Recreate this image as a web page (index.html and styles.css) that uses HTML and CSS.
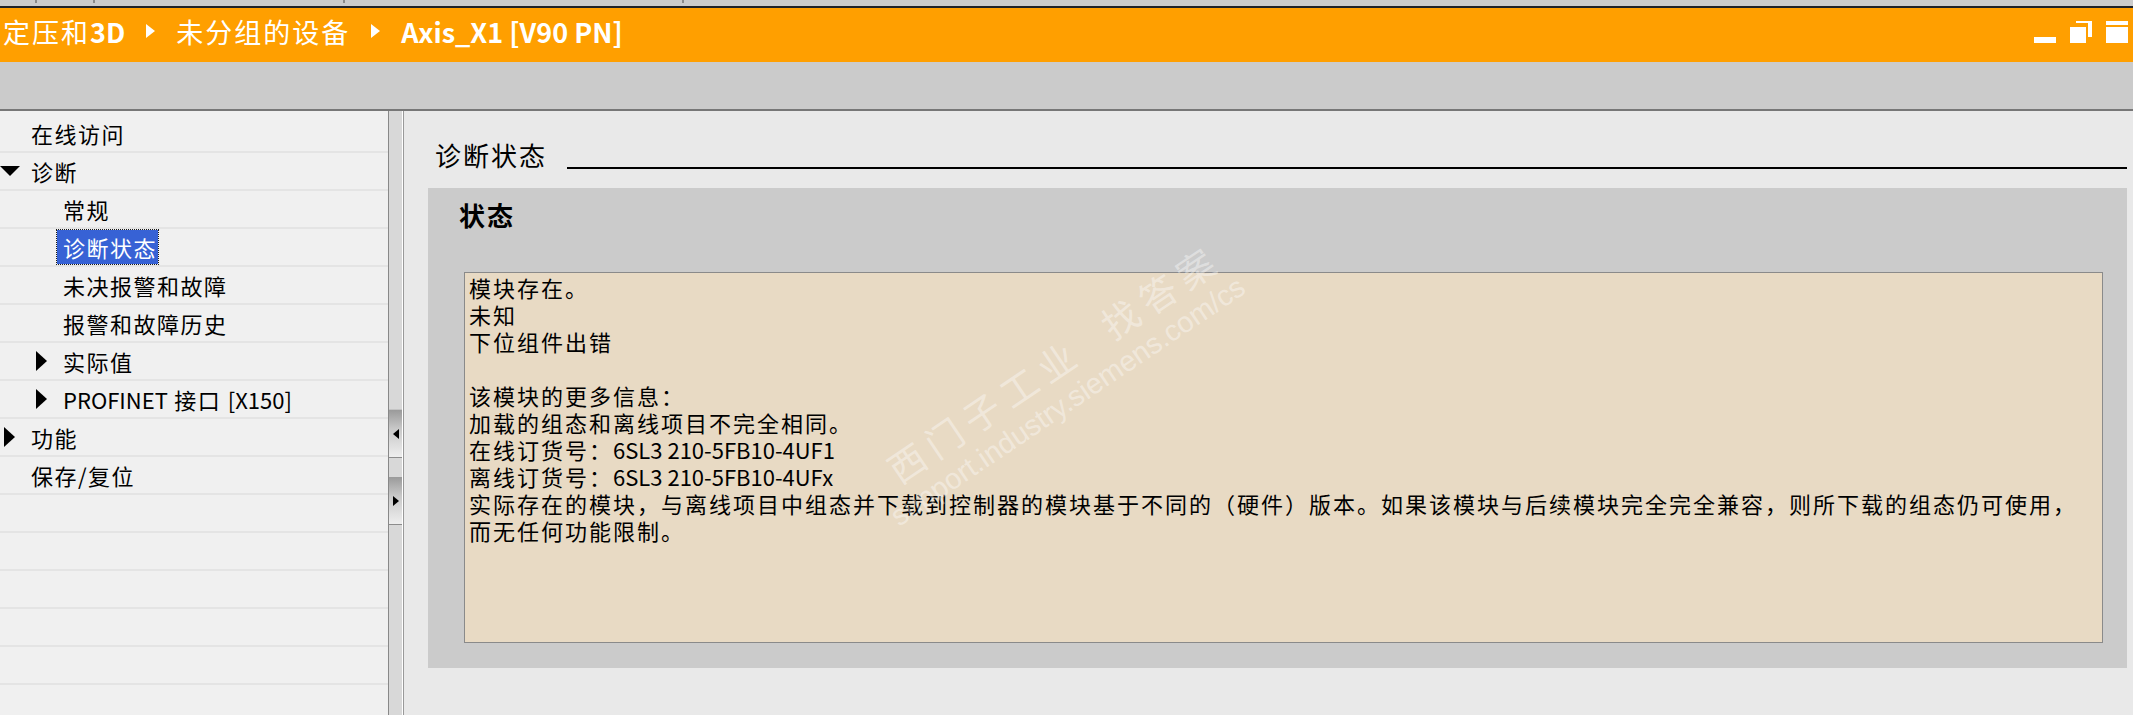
FILE: index.html
```html
<!DOCTYPE html>
<html lang="zh-CN">
<head>
    <meta charset="UTF-8">
    <meta name="viewport" content="width=device-width, initial-scale=1.0">
    <title>诊断状态 - Axis_X1 [V90 PN]</title>
    <link rel="stylesheet" href="styles.css">
</head>
<body>
    <div class="top-strip">
        <span class="tick t1"></span>
        <span class="tick t2"></span>
        <span class="tick t3"></span>
        <span class="tick t4"></span>
    </div>

    <div class="title-bar">
        <div class="crumbs">
            <span>定压和<b>3D</b></span>
            <span class="crumb-arrow"></span>
            <span>未分组的设备</span>
            <span class="crumb-arrow"></span>
            <span><b>Axis_X1 [V90 PN]</b></span>
        </div>
        <svg class="win-buttons" width="94" height="22" viewBox="0 0 94 22">
            <rect x="0" y="16" width="22" height="6" fill="#fff"/>
            <rect x="42" y="0" width="16" height="2" fill="#fff"/>
            <rect x="54" y="0" width="4" height="16" fill="#fff"/>
            <rect x="36" y="6" width="16" height="16" fill="#fff"/>
            <rect x="72" y="0" width="22" height="4" fill="#fff"/>
            <rect x="72" y="6" width="22" height="16" fill="#fff"/>
        </svg>
    </div>

    <div class="tool-bar"></div>

    <div class="main">
        <div class="nav">
            <div class="row lvl1"><span class="tw"></span>在线访问</div>
            <div class="row lvl1"><span class="tw"><i class="tri-down"></i></span>诊断</div>
            <div class="row lvl2"><span class="tw"></span>常规</div>
            <div class="row lvl2"><span class="tw"></span><span class="selected">诊断状态</span></div>
            <div class="row lvl2"><span class="tw"></span>未决报警和故障</div>
            <div class="row lvl2"><span class="tw"></span>报警和故障历史</div>
            <div class="row lvl2"><span class="tw"><i class="tri-right"></i></span>实际值</div>
            <div class="row lvl2"><span class="tw"><i class="tri-right"></i></span><span class="latin">PROFINET</span>&nbsp;接口&nbsp;<span class="latin">[X150]</span></div>
            <div class="row lvl1"><span class="tw"><i class="tri-right"></i></span>功能</div>
            <div class="row lvl1"><span class="tw"></span>保存/复位</div>
            <div class="row"></div>
            <div class="row"></div>
            <div class="row"></div>
            <div class="row"></div>
            <div class="row"></div>
            <div class="row"></div>
        </div>

        <div class="splitter">
            <div class="split-gap"></div>
            <div class="split-btn"><i class="arr-left"></i></div>
            <div class="split-mid"></div>
            <div class="split-btn"><i class="arr-right"></i></div>
        </div>

        <div class="content">
            <div class="heading">
                <span class="heading-text">诊断状态</span>
                <span class="heading-rule"></span>
            </div>

            <div class="panel">
                <div class="panel-title">状态</div>
                <div class="status-box">模块存在。
未知
下位组件出错

该模块的更多信息：
加载的组态和离线项目不完全相同。
在线订货号：<span class="latin">6SL3 210-5FB10-4UF1</span>
离线订货号：<span class="latin">6SL3 210-5FB10-4UFx</span>
实际存在的模块，与离线项目中组态并下载到控制器的模块基于不同的（硬件）版本。如果该模块与后续模块完全完全兼容，则所下载的组态仍可使用，
而无任何功能限制。</div>
            </div>

            <div class="watermark">
                <div class="wm-cn">西门子工业&nbsp;&nbsp;找答案</div>
                <div class="wm-url">support.industry.siemens.com/cs</div>
            </div>
        </div>
    </div>
</body>
</html>
```

FILE: styles.css
```css
body {
    margin: 0;
    width: 2133px;
    height: 715px;
    overflow: hidden;
    font-family: "Noto Sans CJK SC", "Noto Sans", sans-serif;
    color: #000;
    background-color: #e9e9e9;
}
.latin {
    letter-spacing: 0;
}
.top-strip {
    height: 6px;
    background-color: #cbcbcb;
    border-bottom: 2px solid #1f2228;
    display: flex;
}
.tick {
    width: 2px;
    height: 3px;
    background-color: #8a8a8a;
}
.t1 { margin-left: 35px; }
.t2 { margin-left: 56px; }
.t3 { margin-left: 248px; }
.t4 { margin-left: 337px; }

.title-bar {
    height: 54px;
    background-color: #ff9f00;
    display: flex;
    align-items: flex-start;
    color: #fff;
}
.crumbs {
    display: flex;
    align-items: center;
    gap: 21px;
    padding-left: 3px;
    height: 46px;
    font-size: 27px;
    letter-spacing: 2px;
    white-space: nowrap;
}
.crumbs b {
    font-weight: 600;
    letter-spacing: 0;
}
.crumb-arrow {
    width: 0;
    height: 0;
    border-top: 7px solid transparent;
    border-bottom: 7px solid transparent;
    border-left: 9px solid #fff;
}
.win-buttons {
    margin-left: auto;
    margin-top: 13px;
    margin-right: 5px;
}

.tool-bar {
    height: 47px;
    background-color: #cbcbcb;
    border-bottom: 2px solid #777;
}

.main {
    display: flex;
    height: 604px;
}

/* arbre de navigation */
.nav {
    width: 388px;
    background-color: #f0f0f0;
    padding-top: 4px;
    font-size: 22px;
    letter-spacing: 1.5px;
}
.row {
    height: 36px;
    border-bottom: 2px solid #e4e4e4;
    display: flex;
    align-items: center;
    white-space: nowrap;
}
.lvl2 {
    padding-left: 32px;
}
.tw {
    width: 31px;
    height: 20px;
    flex-shrink: 0;
    display: flex;
    align-items: center;
}
.tri-down {
    width: 0;
    height: 0;
    border-left: 10px solid transparent;
    border-right: 10px solid transparent;
    border-top: 10px solid #000;
}
.tri-right {
    width: 0;
    height: 0;
    margin-left: 4px;
    border-top: 10px solid transparent;
    border-bottom: 10px solid transparent;
    border-left: 11px solid #000;
}
.selected {
    background-color: #3762d5;
    color: #fff;
    outline: 1px dotted #1a1a1a;
    margin-left: -6px;
    padding: 0 1px 0 6px;
    line-height: 34px;
}

/* séparateur */
.splitter {
    width: 13px;
    background-color: #d8d8d8;
    border-left: 1px solid #888;
    border-right: 1px solid #fff;
    box-shadow: 1px 0 0 #999;
    margin-right: 1px;
}
.split-gap {
    height: 298px;
    border-bottom: 1px solid #c4c4c4;
}
.split-btn {
    height: 47px;
    background: linear-gradient(#9a9a9a, #c8c8c8 40%, #eeeeee);
    border-bottom: 1px solid #8c8c8c;
    display: flex;
    align-items: center;
    justify-content: center;
}
.split-mid {
    height: 19px;
}
.arr-left {
    width: 0;
    height: 0;
    border-top: 5px solid transparent;
    border-bottom: 5px solid transparent;
    border-right: 6px solid #000;
}
.arr-right {
    width: 0;
    height: 0;
    border-top: 5px solid transparent;
    border-bottom: 5px solid transparent;
    border-left: 6px solid #000;
}

/* zone de contenu */
.content {
    flex: 1;
    position: relative;
    padding: 27px 6px 0 24px;
    overflow: hidden;
}
.heading {
    display: flex;
    align-items: flex-end;
    padding-left: 7px;
}
.heading-text {
    font-size: 26px;
    line-height: 34px;
    letter-spacing: 2px;
    margin-right: 20px;
}
.heading-rule {
    flex: 1;
    height: 2px;
    margin-bottom: 3px;
    background-color: #000;
}
.panel {
    margin-top: 16px;
    background-color: #cbcbcb;
    padding: 10px 24px 25px 36px;
}
.panel-title {
    font-size: 26px;
    font-weight: 700;
    line-height: 34px;
    letter-spacing: 2px;
    margin-left: -5px;
    margin-bottom: 40px;
}
.status-box {
    height: 371px;
    box-sizing: border-box;
    background-color: #e8dac4;
    border: 1px solid #8a8a8a;
    padding: 1px 4px;
    font-size: 22px;
    line-height: 27px;
    letter-spacing: 2px;
    white-space: pre;
}

.watermark {
    position: absolute;
    left: 474px;
    top: 342px;
    transform: rotate(-34deg);
    transform-origin: 0 0;
    color: rgba(255, 255, 255, 0.4);
    white-space: nowrap;
    pointer-events: none;
}
.wm-cn {
    font-size: 37px;
    line-height: 46px;
    letter-spacing: 8px;
}
.wm-url {
    font-family: "Liberation Sans", Arial, sans-serif;
    font-size: 29px;
    line-height: 34px;
    margin-left: -24px;
}
```
